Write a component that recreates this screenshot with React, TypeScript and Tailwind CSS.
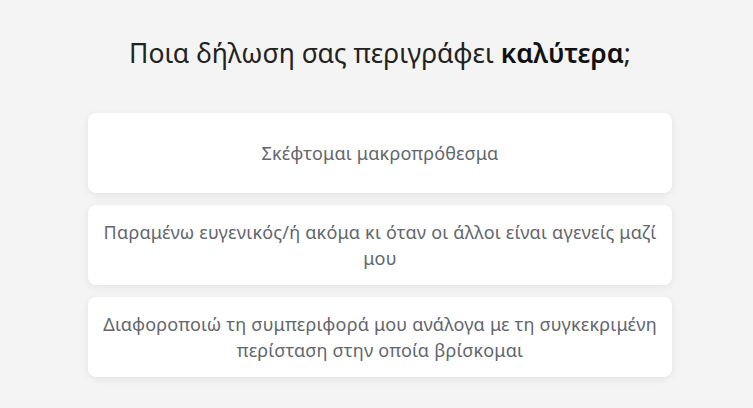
export default function App() {
  const options = [
    "Σκέφτομαι μακροπρόθεσμα",
    "Παραμένω ευγενικός/ή ακόμα κι όταν οι άλλοι είναι αγενείς μαζί μου",
    "Διαφοροποιώ τη συμπεριφορά μου ανάλογα με τη συγκεκριμένη περίσταση στην οποία βρίσκομαι",
  ];
  return (
    <div
      className="w-[753px] h-[408px] bg-[#f4f4f4] flex flex-col items-center overflow-hidden pl-[7px]"
      style={{ fontFamily: '"Noto Sans", "Open Sans", sans-serif' }}
    >
      <h1 className="mt-[34px] text-[26.5px] leading-[38px] text-[#222222] font-normal">
        Ποια δήλωση σας περιγράφει <span className="font-semibold text-[#111111]">καλύτερα</span>;
      </h1>
      <div className="mt-[41px] w-[584px] flex flex-col gap-[12px]">
        {options.map((o) => (
          <div
            key={o}
            className="h-[80px] bg-white rounded-[8px] shadow-[0_2px_8px_rgba(0,0,0,0.07)] flex items-center justify-center px-[12px] text-center text-[18px] leading-[26px] tracking-[0.2px] text-[#62666d]"
          >
            {o}
          </div>
        ))}
      </div>
    </div>
  );
}
